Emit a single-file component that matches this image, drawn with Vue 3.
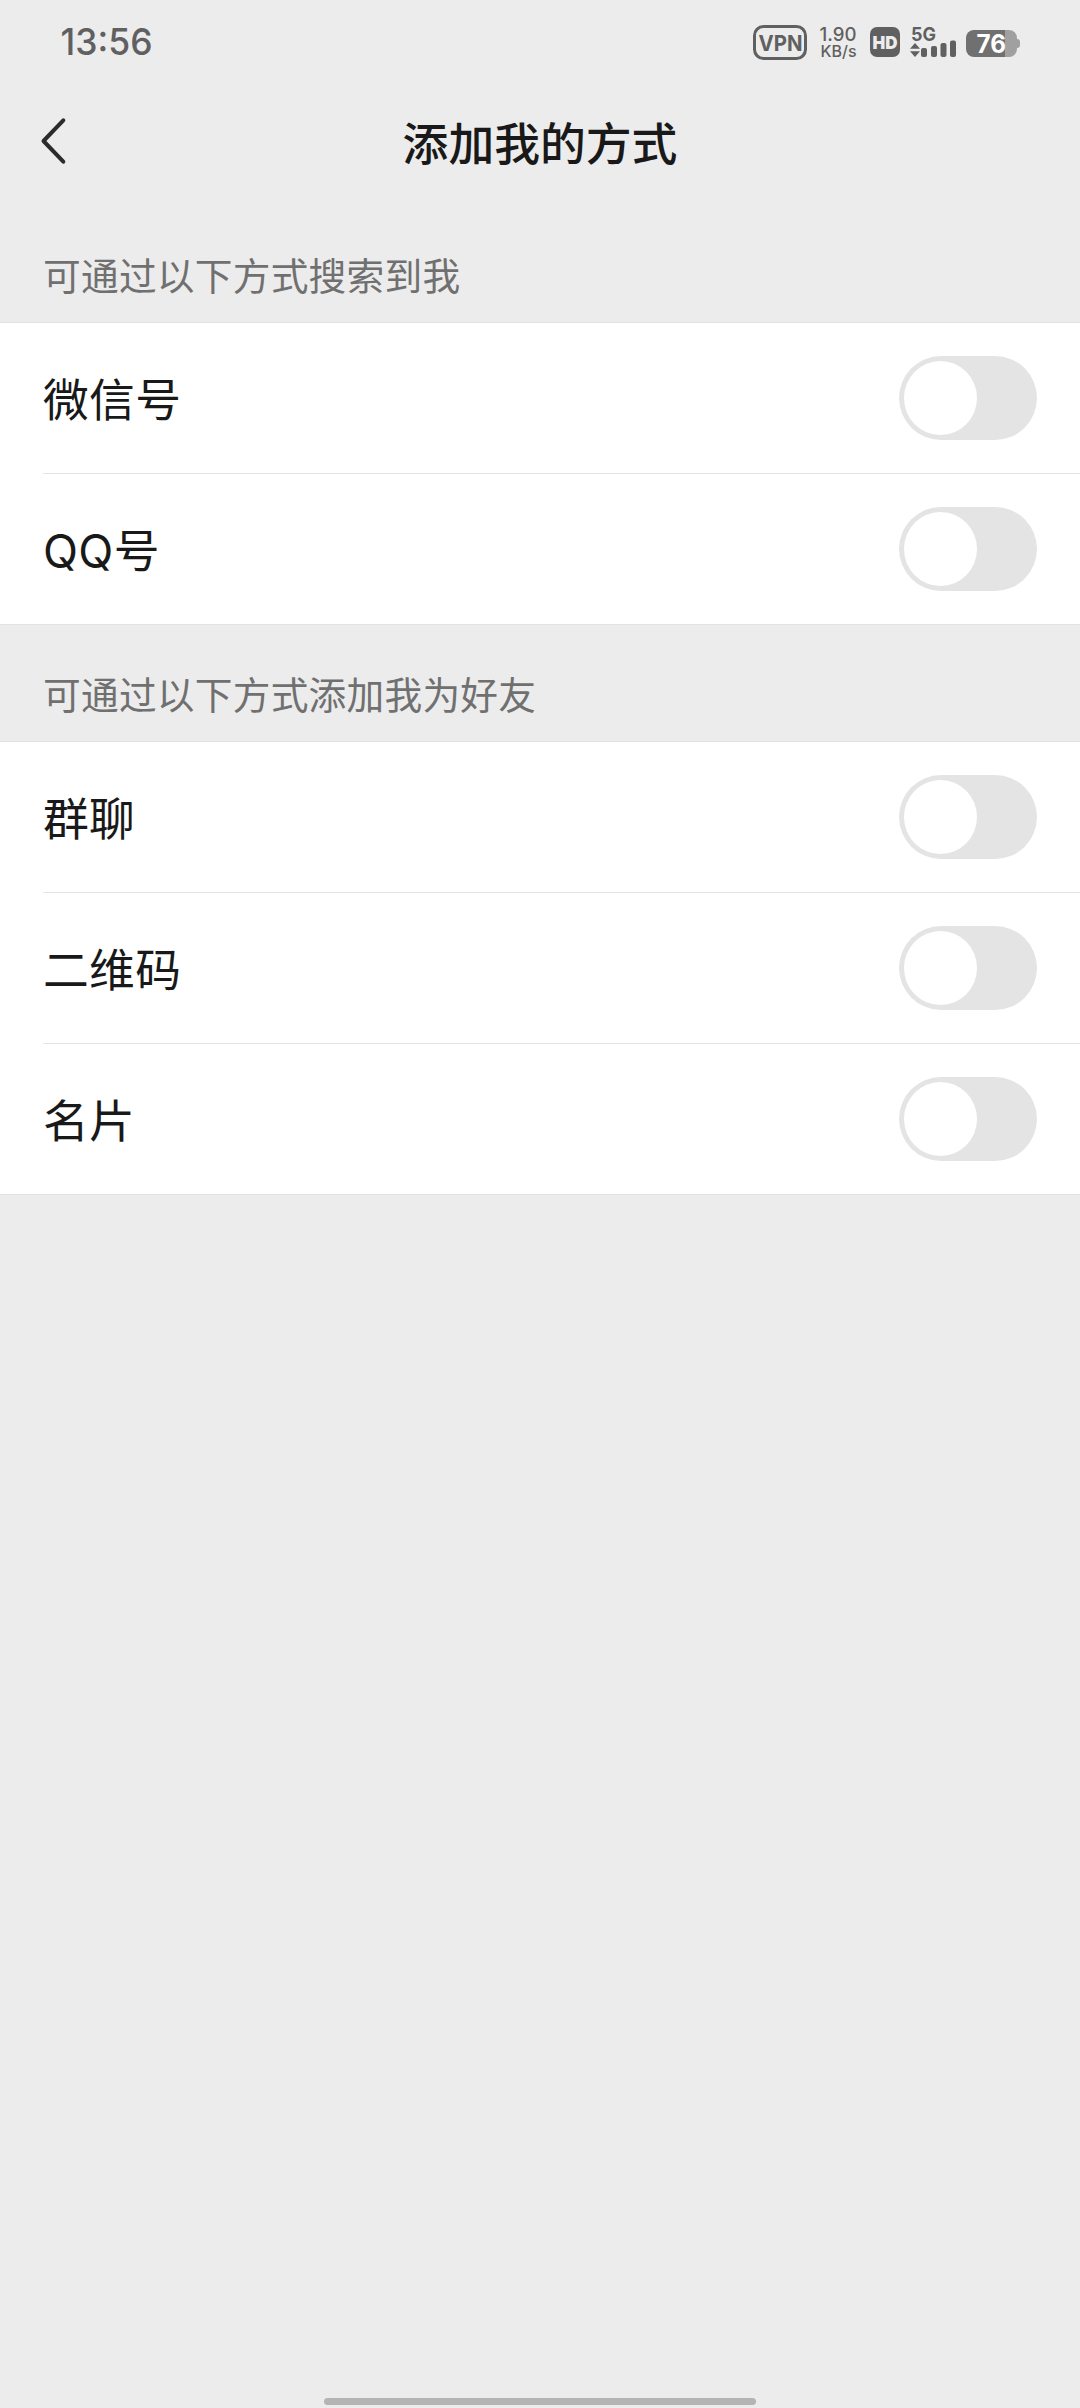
<template>
  <div class="page">
    <header class="status-bar">
      <svg class="clock" width="110" height="56" viewBox="0 -9 110 56">
        <text x="2.5" y="32.2" textLength="92" lengthAdjust="spacingAndGlyphs">13:56</text>
      </svg>

      <svg class="status-icons" width="272" height="56" viewBox="750 14 272 56">
        <!-- vpn -->
        <rect x="754.5" y="26.5" width="51" height="32" rx="9" fill="none" stroke="#606060" stroke-width="3" />
        <text class="bold" x="758.5" y="51" font-size="22" textLength="44" lengthAdjust="spacingAndGlyphs">VPN</text>

        <!-- network speed -->
        <text class="speed" x="819.5" y="41" font-size="19" textLength="37" lengthAdjust="spacingAndGlyphs">1.90</text>
        <text class="speed" x="820.5" y="57" font-size="16" textLength="36" lengthAdjust="spacingAndGlyphs">KB/s</text>

        <!-- hd -->
        <rect x="870" y="27" width="30" height="30" rx="7" fill="#606060" />
        <text class="bold hd" x="872.5" y="48.7" font-size="18" textLength="25" lengthAdjust="spacingAndGlyphs">HD</text>

        <!-- signal -->
        <text class="bold" x="911" y="41.2" font-size="19" textLength="25" lengthAdjust="spacingAndGlyphs">5G</text>
        <path d="M915 43l5 5.7h-10zM915 57l5-5.7h-10z" fill="#606060" />
        <rect x="921" y="48" width="6" height="9" rx="2" fill="#606060" />
        <rect x="931" y="46" width="6" height="11" rx="2" fill="#606060" />
        <rect x="940.5" y="43" width="6" height="14" rx="2" fill="#606060" />
        <rect x="950" y="40.5" width="6" height="16.5" rx="2" fill="#606060" />

        <!-- battery -->
        <path d="M1005 30h4a8 8 0 0 1 8 8v1c2 0 3 1 3 3v3c0 2-1 3-3 3v1a8 8 0 0 1-8 8h-4z" fill="#a0a0a0" />
        <path d="M1005 30h-31a8 8 0 0 0-8 8v11a8 8 0 0 0 8 8h31z" fill="#707070" />
        <text class="bold battery" x="976.5" y="53" font-size="25" textLength="29.5" lengthAdjust="spacingAndGlyphs">76</text>
      </svg>
    </header>

    <nav class="nav-bar">
      <button class="back" aria-label="返回">
        <svg width="28" height="48" viewBox="0 0 28 48">
          <path d="M23.3 3.3L3.5 24L23.3 44.7" fill="none" stroke="#2b2b2b" stroke-width="4" stroke-linecap="round" stroke-linejoin="round" />
        </svg>
      </button>
      <h1 class="title">添加我的方式</h1>
    </nav>

    <section v-for="group in groups" :key="group.title" class="group">
      <h2 class="group-title">{{ group.title }}</h2>
      <ul class="list">
        <li v-for="item in group.items" :key="item.label" class="row">
          <span class="label">{{ item.label }}</span>
          <button
            class="switch"
            :class="{ on: item.enabled }"
            role="switch"
            :aria-checked="item.enabled"
            :aria-label="item.label"
            @click="item.enabled = !item.enabled"
          >
            <span class="knob"></span>
          </button>
        </li>
      </ul>
    </section>

    <div class="home-indicator"></div>
  </div>
</template>

<script setup>
import { reactive } from 'vue'

const groups = reactive([
  {
    title: '可通过以下方式搜索到我',
    items: [
      { label: '微信号', enabled: false },
      { label: 'QQ号', enabled: false }
    ]
  },
  {
    title: '可通过以下方式添加我为好友',
    items: [
      { label: '群聊', enabled: false },
      { label: '二维码', enabled: false },
      { label: '名片', enabled: false }
    ]
  }
])
</script>

<style>
body {
  background: #ececec;
}
</style>

<style scoped>
.page {
  display: flex;
  flex-direction: column;
  box-sizing: border-box;
  width: 1080px;
  height: 2408px;
  padding-bottom: 3px;
  background: #ececec;
  color: #191919;
  font-family: "Noto Sans CJK SC", sans-serif;
}
.status-bar {
  display: flex;
  justify-content: space-between;
  box-sizing: border-box;
  height: 84px;
  padding: 14px 58px 0 58px;
}
.status-bar text {
  font-family: Inter, sans-serif;
  fill: #606060;
}
.clock text {
  font-size: 37px;
  font-weight: 450;
}
.status-bar .bold {
  font-weight: 700;
}
.status-bar .speed {
  font-weight: 450;
}
.status-bar .hd {
  fill: #ececec;
  font-weight: 900;
}
.status-bar .battery {
  fill: #fff;
}
.nav-bar {
  display: grid;
  grid-template-columns: 120px 1fr 120px;
  align-items: center;
  height: 116px;
}
.back {
  display: flex;
  margin: 0;
  padding: 0 0 3px 40px;
  border: 0;
  background: none;
}
.title {
  margin: 0;
  padding-bottom: 3px;
  font-size: 45.8px;
  font-weight: 500;
  line-height: 60px;
  text-align: center;
}
.group-title {
  box-sizing: border-box;
  height: 116px;
  margin: 0;
  padding: 42px 43px 0;
  color: #707070;
  font-size: 37.7px;
  font-weight: 400;
  line-height: 52px;
  letter-spacing: 0.25px;
}
.nav-bar + .group {
  padding-top: 6px;
}
.list {
  margin: 0;
  padding: 0;
  border-top: 1px solid #e2e2e2;
  border-bottom: 1px solid #e2e2e2;
  background: #fff;
  list-style: none;
}
.row {
  display: flex;
  align-items: center;
  justify-content: space-between;
  height: 150px;
  margin-left: 43px;
  padding-right: 43px;
}
.row + .row {
  border-top: 1px solid #e4e4e4;
}
.label {
  padding-top: 6px;
  font-family: Inter, "Noto Sans CJK SC", sans-serif;
  font-size: 45.8px;
  line-height: 60px;
  letter-spacing: 0.3px;
}
.switch {
  display: flex;
  align-items: center;
  width: 138px;
  height: 84px;
  margin: 0;
  padding: 5px;
  border: 0;
  border-radius: 42px;
  background: #e4e4e4;
}
.switch.on {
  justify-content: flex-end;
  background: #07c160;
}
.knob {
  width: 73px;
  height: 74px;
  border-radius: 50%;
  background: #fff;
}
.home-indicator {
  width: 432px;
  height: 7px;
  margin: auto auto 0;
  border-radius: 4px;
  background: #b4b4b4;
}
</style>
